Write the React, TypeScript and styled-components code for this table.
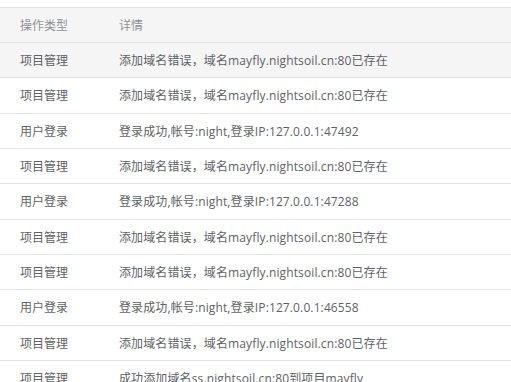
import React from "react";
import styled, { createGlobalStyle } from "styled-components";

const Global = createGlobalStyle`
  html, body { margin: 0; padding: 0; background: #fff; }
  body { font-family: "Open Sans", "Noto Sans CJK SC", sans-serif; overflow: hidden; }
`;

const Page = styled.div`
  padding-top: 7px;
  width: 100%;
`;

const Table = styled.table`
  width: 100%;
  border-collapse: collapse;
  table-layout: fixed;
  font-size: 12px;
  border-top: 1px solid #e3e3e3;
`;

const HeadCell = styled.th<{ $w?: number }>`
  width: ${(p) => (p.$w ? `${p.$w}px` : "auto")};
  text-align: left;
  font-weight: 400;
  color: #8f9196;
  background: #f5f5f5;
  padding: 1px 0 0 20px;
  height: 33px;
  line-height: 33px;
  border-bottom: 1px solid #e3e3e3;
  box-sizing: content-box;
`;

const Row = styled.tr<{ $active?: boolean }>`
  background: ${(p) => (p.$active ? "#f5f5f5" : "#fff")};
`;

const Cell = styled.td<{ $spaced?: boolean }>`
  padding: 8px 0 6px 20px;
  line-height: 20.33px;
  color: #606266;
  letter-spacing: ${(p) => (p.$spaced ? "0.12px" : "0")};
  border-bottom: 1px solid #e3e3e3;
  white-space: nowrap;
  overflow: hidden;
`;

const rows: [string, string][] = [
  ["项目管理", "添加域名错误，域名mayfly.nightsoil.cn:80已存在"],
  ["项目管理", "添加域名错误，域名mayfly.nightsoil.cn:80已存在"],
  ["用户登录", "登录成功,帐号:night,登录IP:127.0.0.1:47492"],
  ["项目管理", "添加域名错误，域名mayfly.nightsoil.cn:80已存在"],
  ["用户登录", "登录成功,帐号:night,登录IP:127.0.0.1:47288"],
  ["项目管理", "添加域名错误，域名mayfly.nightsoil.cn:80已存在"],
  ["项目管理", "添加域名错误，域名mayfly.nightsoil.cn:80已存在"],
  ["用户登录", "登录成功,帐号:night,登录IP:127.0.0.1:46558"],
  ["项目管理", "添加域名错误，域名mayfly.nightsoil.cn:80已存在"],
  ["项目管理", "成功添加域名ss.nightsoil.cn:80到项目mayfly"],
];

export default function App() {
  return (
    <Page>
      <Global />
      <Table>
        <thead>
          <tr>
            <HeadCell $w={79}>操作类型</HeadCell>
            <HeadCell>详情</HeadCell>
          </tr>
        </thead>
        <tbody>
          {rows.map(([t, d], i) => (
            <Row key={i} $active={i === 0}>
              <Cell>{t}</Cell>
              <Cell $spaced>{d}</Cell>
            </Row>
          ))}
        </tbody>
      </Table>
    </Page>
  );
}
